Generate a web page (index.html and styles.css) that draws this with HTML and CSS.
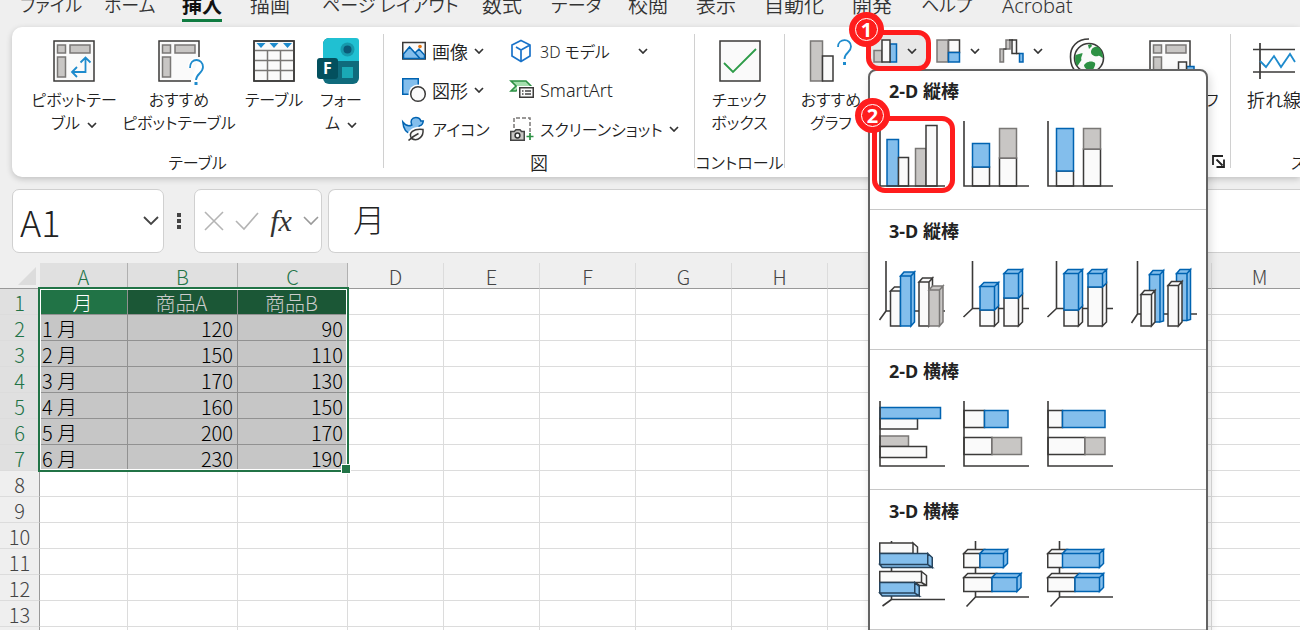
FILE: index.html
```html
<!DOCTYPE html>
<html lang="ja">
<head>
<meta charset="utf-8">
<title>Book1 - Excel</title>
<link rel="stylesheet" href="styles.css">
</head>
<body>
<svg class="defs" aria-hidden="true">
  <symbol id="chev" viewBox="0 0 10 6"><path d="M1 1l4 4 4-4" fill="none" stroke="#333" stroke-width="1.7"/></symbol>
</svg>

<nav class="tabs">
  <a href="#" class="kana">ファイル</a><a href="#" class="kana">ホーム</a><a href="#" class="active">挿入</a><a href="#">描画</a><a href="#" class="kana">ページ レイアウト</a><a href="#">数式</a><a href="#" class="kana">データ</a><a href="#">校閲</a><a href="#">表示</a><a href="#">自動化</a><a href="#">開発</a><a href="#" class="kana">ヘルプ</a><a href="#">Acrobat</a>
</nav>

<div class="ribbon">
  <section class="group group-tables">
    <div class="tools">
      <button class="big w92">
        <svg width="44" height="52" viewBox="0 0 44 52"><path class="w" d="M2 4h40v40H2z"/><path class="g" d="M5.500 8h8v8h-8zM18 8h20v8H18zM5.500 20h8v20h-8z"/><path class="line" d="M33.500 21v14H21M28.500 25.500l5-5 5 5M25 30l-5 5 5 5"/></svg>
        <span>ピボットテー<br>ブル <svg class="chev"><use href="#chev"/></svg></span>
      </button>
      <button class="big w118">
        <svg width="44" height="52" viewBox="0 0 44 52"><path class="w" d="M42 20V4H2v40h32" /><path class="g" d="M5.500 8h8v8h-8zM18 8h20v8H18zM5.500 20h8v20h-8z"/><path class="halo" d="M33 31c0-11 13-10 13-1 0 6-7 7-7 13"/><path class="line" d="M33 31c0-11 13-10 13-1 0 6-7 7-7 13"/><path class="dot" d="M37.500 45h3v3h-3z"/></svg>
        <span>おすすめ<br>ピボットテーブル</span>
      </button>
      <button class="big w72">
        <svg width="44" height="52" viewBox="0 0 44 52"><path class="w" d="M2 4h40v40H2z"/><path d="M2 13.500h40M2 23.500h40M2 33.500h40M15.500 13v31M28.500 13v31" stroke="#797775" stroke-width="1.500"/><path d="M2 4h40v40H2z" fill="none" stroke="#3b3a39" stroke-width="1.500"/><path class="dot" d="M4.500 6h9L9 11zM17.500 6h9L22 11zM31 6h9l-4.500 5z"/></svg>
        <span>テーブル</span>
      </button>
      <button class="big w62">
        <svg width="50" height="52" viewBox="0 0 50 52"><rect x="7" y="1" width="36" height="46" rx="6" fill="#0f6b7c"/><path d="M13 1h27a3 3 0 0 1 3 3v20H7V7a6 6 0 0 1 6-6z" fill="#20c0d2"/><circle cx="31.500" cy="12.500" r="7" fill="#1699ac"/><circle cx="31.500" cy="12.500" r="4" fill="#0b5a78"/><rect x="26" y="30" width="11" height="11" fill="#1aa9b5"/><rect x="1" y="21" width="21" height="21" rx="3" fill="#03505e"/><text x="11.500" y="37" text-anchor="middle" class="f">F</text></svg>
        <span>フォー<br>ム <svg class="chev"><use href="#chev"/></svg></span>
      </button>
    </div>
    <div class="caption">テーブル</div>
  </section>
  <i class="sep"></i>
  <section class="group group-figs">
    <div class="tools">
      <div class="stack">
        <button class="small"><svg width="24" height="24" viewBox="0 0 24 24"><path class="w" d="M.750 3.500h22.500v16.500H.750z"/><path class="b" d="M1.500 15l6-7L18 19.500H1.500zM13 14l4-4 5.500 6v3.500H18z"/><circle cx="18" cy="7.500" r="1.800" fill="#e8730c"/></svg>画像<svg class="chev"><use href="#chev"/></svg></button>
        <button class="small"><svg width="24" height="24" viewBox="0 0 24 24"><path class="b" d="M.750.750h15.500v15.500H.750z"/><circle cx="16" cy="16" r="9.500" fill="#fff"/><circle class="w" cx="16" cy="16" r="7.300"/></svg>図形<svg class="chev"><use href="#chev"/></svg></button>
        <button class="small kana"><svg width="24" height="24" viewBox="0 0 24 24"><path class="b" d="M.800 5c3 4 6 4.500 9 3-2-4 0-7.500 4-7.500 3 0 4.500 1.500 5 3.500h2.500c-.3 3-2 4.500-4 5 0 4-4 8-8 8-4.500-1-8-5-8.500-12z"/><path d="M9.500 21.500c-3.500-6 2-10 11.500-9 .8 7-5 12.500-11.500 9z" fill="#fff" stroke="#fff" stroke-width="5"/><path class="w" d="M9.500 21.500c-3.500-6 2-10 11.500-9 .8 7-5 12.500-11.500 9z"/><path class="ax" d="M6.500 23.500c3-3 6-5 10-7"/></svg>アイコン</button>
      </div>
      <div class="stack stack-wide">
        <button class="small kana gap-wide"><svg width="24" height="24" viewBox="0 0 24 24"><path d="M11 1.500l9 4.500v11l-9 5.500L2 17V6zM6 8l5 3 9-5M11 11v11" fill="none" stroke="#1a73c9" stroke-width="1.700"/></svg>3D モデル<svg class="chev"><use href="#chev"/></svg></button>
        <button class="small"><svg width="24" height="24" viewBox="0 0 24 24"><path d="M1 3h15l5 5-2 2H9l-3 3H1l5-5z" fill="#a5dfae" stroke="#2d9144" stroke-width="1.600"/><path d="M7 8h17v14H7z" fill="#fff"/><path class="w" d="M9.750 9.750h13.500v9.500H9.750z"/><path d="M12 13h1.500M12 16h1.500M15 13h6M15 16h6" stroke="#444" stroke-width="1.400"/></svg>SmartArt</button>
        <button class="small kana"><svg width="24" height="24" viewBox="0 0 24 24"><path d="M4 11V1h16v14" fill="none" stroke="#797775" stroke-width="1.500" stroke-dasharray="4 2"/><path class="g" d="M.750 14.500h3.500L6 12.750h4l1.500 1.750h2.750v8.750H.750z" style="stroke:#444"/><circle cx="7.500" cy="18.500" r="2.400" fill="#fff" stroke="#333" stroke-width="1.500"/><path d="M20 16v7M16.500 19.500h7" stroke="#2d9144" stroke-width="1.700"/></svg>スクリーンショット<svg class="chev"><use href="#chev"/></svg></button>
      </div>
    </div>
    <div class="caption">図</div>
  </section>
  <i class="sep"></i>
  <section class="group group-ctrl">
    <div class="tools">
      <button class="big w90">
        <svg width="44" height="52" viewBox="0 0 44 52"><path class="w" d="M2 4h40v40H2z"/><path d="M6 26l9 9 23-23" fill="none" stroke="#2d9c48" stroke-width="1.800"/></svg>
        <span>チェック<br>ボックス</span>
      </button>
    </div>
    <div class="caption">コントロール</div>
  </section>
  <i class="sep"></i>
  <section class="group group-charts">
    <div class="tools">
      <button class="big w80">
        <svg width="44" height="52" viewBox="0 0 44 52"><path class="g" d="M1.500 4h12v40h-12z"/><path class="w" d="M13.500 19H24v25H13.500z"/><path class="line" d="M29 10c0-9 13-9 13-.5C42 16 35.500 15 35.500 22"/><path class="dot" d="M34 25h3v3h-3z"/></svg>
        <span>おすすめ<br>グラフ</span>
      </button>
      <div class="chart-btn">
        <button class="mini pressed" aria-label="縦棒/横棒グラフの挿入"><svg width="26" height="24" viewBox="0 0 26 24"><path class="g" d="M1 11.500h8V23H1z"/><path class="b" d="M17 5h6.500v18H17z"/><path class="w" d="M9 1h8v22H9z"/></svg><svg class="chev"><use href="#chev"/></svg></button>
        <div class="menu">
          <section><h3>2-D 縦棒</h3><div class="gallery">
            <button aria-label="集合縦棒"><svg viewBox="0 0 66 66"><path class="b" d="M8 18.500h11.500V65H8z"/><path class="w" d="M19.500 36.500h10V65h-10z"/><path class="g" d="M36.500 27.500h10.500V65H36.500z"/><path class="w" d="M47 4.500h11V65H47z"/><path class="ax" d="M1 0v65h65"/></svg></button>
            <button aria-label="積み上げ縦棒"><svg viewBox="0 0 66 66"><path class="w" d="M9.500 46h17v19h-17zM36.500 37h17v28h-17z"/><path class="b" d="M9.500 22.500h17V46h-17z"/><path class="g" d="M36.500 7.500h17V37h-17z"/><path class="ax" d="M1 0v65h65"/></svg></button>
            <button aria-label="100% 積み上げ縦棒"><svg viewBox="0 0 66 66"><path class="w" d="M9.500 50h17v15h-17zM36.500 28h17v37h-17z"/><path class="b" d="M9.500 7.500h17V50h-17z"/><path class="g" d="M36.500 7.500h17V28h-17z"/><path class="ax" d="M1 0v65h65"/></svg></button>
          </div></section>
          <section><h3>3-D 縦棒</h3><div class="gallery">
            <button aria-label="3-D 集合縦棒"><svg viewBox="0 0 66 66"><path class="ax" d="M7 0v50h59M7 50l-6.500 9"/><path class="w" d="M11.500 30h10v35h-10zM11.500 30l4-4h10l-4 4z"/><path class="b" d="M21.500 15H32v50H21.500zM21.500 15l3.500-4h10.500L32 15zM32 15l3.500-4v50L32 65z"/><path class="w" d="M40 21h10v44H40zM40 21l3.500-4h10L50 21zM50 21l3.500-4v44L50 65z"/><path class="g" d="M50 29h10.500v36H50zM50 29l3.500-4H64l-3.500 4zM60.500 29l3.500-4v36l-3.500 4z"/></svg></button>
            <button aria-label="3-D 積み上げ縦棒"><svg viewBox="0 0 66 66"><path class="ax" d="M9.500 0v47.500H66M9.500 47.500L.5 56"/><path class="w" d="M17 49h14.500v16H17zM31.500 49l4-4v16l-4 4zM41 37h14.500v28H41zM55.500 37l4-4v28l-4 4z"/><path class="b" d="M17 25.500h14.500V49H17zM17 25.500l4-4h14.500l-4 4zM31.500 25.500l4-4V45l-4 4zM41 12.500h14.500V37H41zM41 12.500l4-4h14.500l-4 4zM55.500 12.500l4-4V33l-4 4z"/></svg></button>
            <button aria-label="3-D 100% 積み上げ縦棒"><svg viewBox="0 0 66 66"><path class="ax" d="M9.500 0v47.500H66M9.500 47.500L.5 56"/><path class="w" d="M17 49h14.500v16H17zM31.500 49l4-4v16l-4 4zM41 26h14.500v39H41zM55.500 26l4-4v39l-4 4z"/><path class="b" d="M17 12.500h14.500V49H17zM17 12.500l4-4h14.500l-4 4zM31.500 12.500l4-4V45l-4 4zM41 12.500h14.500V26H41zM41 12.500l4-4h14.500l-4 4zM55.500 12.500l4-4V22l-4 4z"/></svg></button>
            <button aria-label="3-D 縦棒"><svg viewBox="0 0 66 66"><path class="ax" d="M6.500 0v53H66M6.500 53L.5 62"/><path class="b" d="M18.500 13.500H29V61H18.500zM18.500 13.500l3.500-4h10.500l-3.500 4zM29 13.500l3.500-4V60L29 61zM45.500 12.500H56v47H45.500zM45.500 12.500l3.500-4h10.500l-3.500 4zM56 12.500l3.500-4v50L56 59.500z"/><path class="w" d="M10 33.500h10.500V65H10zM10 33.500l3.500-4H24l-3.500 4zM20.500 33.500l3.500-4V61l-3.500 4zM37 24.500h10.500V65H37zM37 24.500l3.500-4H51l-3.500 4zM47.500 24.500l3.500-4V61l-3.500 4z"/></svg></button>
          </div></section>
          <section><h3>2-D 横棒</h3><div class="gallery">
            <button aria-label="集合横棒"><svg viewBox="0 0 66 66"><path class="w" d="M1 17.500h37.500V28H1z"/><path class="g" d="M1 35h28.500v10.500H1z"/><path class="w" d="M1 45.500h46.500v11H1z"/><path class="b" d="M1 6.500h60.500v11H1z"/><path class="ax" d="M1 0v65h65"/></svg></button>
            <button aria-label="積み上げ横棒"><svg viewBox="0 0 66 66"><path class="w" d="M1 9.500h20.500v17H1zM1 36.500h28v17H1z"/><path class="b" d="M21.500 9.500H45v17H21.500z"/><path class="g" d="M29 36.500h29.500v17H29z"/><path class="ax" d="M1 0v65h65"/></svg></button>
            <button aria-label="100% 積み上げ横棒"><svg viewBox="0 0 66 66"><path class="w" d="M1 9.500h14.500v17H1zM1 36.500h37v17H1z"/><path class="b" d="M15.500 9.500H58v17H15.500z"/><path class="g" d="M38 36.500h20v17H38z"/><path class="ax" d="M1 0v65h65"/></svg></button>
          </div></section>
          <section><h3>3-D 横棒</h3><div class="gallery">
            <button aria-label="3-D 集合横棒"><svg viewBox="0 0 66 66"><path class="ax" d="M12.500 0v58.500H66M12.500 58.500L3.500 65"/><path class="w" d="M.750 2H34v10.500H.750zM34 2l4.500 4v10L34 12.500z"/><path class="b dark" d="M.750 12.500h48v11h-48zM48.750 12.500l4.500 4v10l-4.500-3zM.750 23.500l2.500 3h50l-4.500-3z"/><path class="w" d="M.750 30.500H42.500v11H.750zM42.500 30.500l5 4v10h-7l-5-3h7zM42.500 41.500l5 3"/><path class="b dark" d="M.750 41.500h35V52h-35zM35.750 41.500l4.500 4V55l-4.500-3zM.750 52l2.500 3h37l-4.500-3z"/></svg></button>
            <button aria-label="3-D 積み上げ横棒"><svg viewBox="0 0 66 66"><path class="ax" d="M12.500 0v56H66M12.500 56l-9 9.500"/><path class="w" d="M.750 12.500H17v14H.750zM.750 12.500l4-4H21l-4 4zM.750 36.500H29v14H.750zM.750 36.500l4-4H33l-4 4z"/><path class="b" d="M17 12.500h23.500v14H17zM17 12.500l4-4h23.500l-4 4zM40.500 12.500l4-4v14l-4 4zM29 36.500h25v14H29zM29 36.500l4-4h25l-4 4zM54 36.500l4-4v14l-4 4z"/></svg></button>
            <button aria-label="3-D 100% 積み上げ横棒"><svg viewBox="0 0 66 66"><path class="ax" d="M12.500 0v56H66M12.500 56l-9 9.500"/><path class="w" d="M.750 12.500h15v14h-15zM.750 12.500l4-4h15l-4 4zM.750 36.500H28v14H.750zM.750 36.500l4-4H32l-4 4z"/><path class="b" d="M15.500 12.500h37v14h-37zM15.500 12.500l4-4h37l-4 4zM52.500 12.500l4-4v14l-4 4zM28 36.500h24.500v14H28zM28 36.500l4-4h24.500l-4 4zM52.500 36.500l4-4v14l-4 4z"/></svg></button>
          </div></section>
        </div>
        <div class="mark mark-one"><span class="badge"><b>1</b></span></div>
        <div class="mark mark-two"><span class="badge"><b>2</b></span></div>
      </div>
      <button class="mini" aria-label="階層構造グラフの挿入"><svg width="26" height="24" viewBox="0 0 26 24"><path class="w" d="M12.500 1h11v12.500h-11z"/><path class="g" d="M1 1h11v22H1z"/><path class="b" d="M12.500 13.500h11V23h-11z"/></svg><svg class="chev"><use href="#chev"/></svg></button>
      <button class="mini" aria-label="ウォーターフォール図の挿入"><svg width="26" height="24" viewBox="0 0 26 24"><path class="g" d="M1 10h3.500v13H1zM7 1h4v9H7z"/><path class="w" d="M13 1h4.500v13.500H13z"/><path class="b" d="M20.500 14.500H24V23h-3.500z"/><path d="M4.500 10h3M10 1h4M17 14.500h3.500" stroke="#3b3a39" stroke-width="1.500"/></svg><svg class="chev"><use href="#chev"/></svg></button>
      <button class="big w58" aria-label="マップ"><svg width="44" height="52" viewBox="3 0 44 52"><path d="M25 2C13 2 6 10 6.500 20c0 6 2 12 6 15" fill="none" stroke="#3b3a39" stroke-width="1.600"/><circle cx="25" cy="21" r="14.500" fill="#fafafa" stroke="#3b3a39" stroke-width="1.600"/><path d="M27 15c0-3 3-6 7-5 3 2 5 6 5 11-2 0-3-3-5-2-3 1-7-1-7-4zM11.500 18l7-2c0 3-2 4-1 7l-4 6c-2-2-3-7-2-11zM22 26c3-2 7-2 9 0 1 3-2 5-2 8-5 0-9-3-9-6zM24 8l3-1 1 2-3 3z" fill="#2d9144"/></svg></button>
      <button class="big w104">
        <svg width="44" height="52" viewBox="0 0 44 52"><path class="w" d="M2 4h40v40H2z"/><path class="g" d="M5.500 8h8v8h-8zM18 8h20v8H18zM5.500 20h8v20h-8z"/><path class="b" d="M38.500 29.500H46V44h-7.500z"/><path class="w" d="M30.500 25h8v19h-8z"/></svg>
        <span>ピボットグラフ</span>
      </button>
    </div>
    <button class="launcher" aria-label="グラフのオプション"><svg width="13" height="13" viewBox="0 0 13 13"><path d="M1 10V1h10M4.500 4.500l6 6M12 4.500V12H4.500" fill="none" stroke="#222" stroke-width="1.800"/></svg></button>
  </section>
  <i class="sep"></i>
  <section class="group group-spark">
    <div class="tools">
      <button class="big w86 kanji">
        <svg width="44" height="52" viewBox="0 0 44 52"><path d="M8 6v36M1 12.500h42M1 35h42" stroke="#3b3a39" stroke-width="1.700"/><path class="line" d="M8 24l6 6 8-11 7 11 9-13 5 8"/></svg>
        <span>折れ線</span>
      </button>
    </div>
    <div class="caption">スパークライン</div>
  </section>
</div>

<div class="formula-bar">
  <div class="box name-box"><input type="text" value="A1" aria-label="名前ボックス"><svg class="chev-l" viewBox="0 0 16 10"><path d="M1 1l7 7 7-7" fill="none" stroke="#444" stroke-width="1.800"/></svg></div>
  <svg class="dots" viewBox="0 0 4 16"><path d="M0 0h4v4H0zM0 6h4v4H0zM0 12h4v4H0z" fill="#444"/></svg>
  <div class="box fx-box">
    <button aria-label="キャンセル"><svg width="20" height="20" viewBox="0 0 20 20"><path d="M1 1l18 18M19 1L1 19" stroke="#b4b4b4" stroke-width="1.600"/></svg></button>
    <button aria-label="入力"><svg width="24" height="18" viewBox="0 0 24 18"><path d="M1 9l8 8L23 1" fill="none" stroke="#b4b4b4" stroke-width="1.600"/></svg></button>
    <button class="fx" aria-label="関数の挿入">fx</button>
    <svg class="chev-l" viewBox="0 0 16 10"><path d="M1 1l7 7 7-7" fill="none" stroke="#999" stroke-width="1.600"/></svg>
  </div>
  <div class="box formula"><input type="text" value="月" aria-label="数式バー"></div>
</div>

<main class="sheet">
  <table>
    <colgroup><col class="c-head"><col class="c-a"><col class="c-b"><col class="c-b"><col span="10" class="c-n"></colgroup>
    <tr class="heads"><th class="corner"><svg width="18" height="18" viewBox="0 0 18 18"><path d="M18 0v18H0z" fill="#dcdcdc"/></svg></th><th class="on">A</th><th class="on">B</th><th class="on">C</th><th>D</th><th>E</th><th>F</th><th>G</th><th>H</th><th>I</th><th>J</th><th>K</th><th>L</th><th>M</th></tr>
    <tr class="sel title"><th>1</th><td class="cur">月</td><td>商品A</td><td>商品B</td><td></td><td></td><td></td><td></td><td></td><td></td><td></td><td></td><td></td><td></td></tr>
    <tr class="sel"><th>2</th><td class="month">1 月</td><td>120</td><td>90</td><td></td><td></td><td></td><td></td><td></td><td></td><td></td><td></td><td></td><td></td></tr>
    <tr class="sel"><th>3</th><td class="month">2 月</td><td>150</td><td>110</td><td></td><td></td><td></td><td></td><td></td><td></td><td></td><td></td><td></td><td></td></tr>
    <tr class="sel"><th>4</th><td class="month">3 月</td><td>170</td><td>130</td><td></td><td></td><td></td><td></td><td></td><td></td><td></td><td></td><td></td><td></td></tr>
    <tr class="sel"><th>5</th><td class="month">4 月</td><td>160</td><td>150</td><td></td><td></td><td></td><td></td><td></td><td></td><td></td><td></td><td></td><td></td></tr>
    <tr class="sel"><th>6</th><td class="month">5 月</td><td>200</td><td>170</td><td></td><td></td><td></td><td></td><td></td><td></td><td></td><td></td><td></td><td></td></tr>
    <tr class="sel"><th>7</th><td class="month">6 月</td><td>230</td><td>190</td><td></td><td></td><td></td><td></td><td></td><td></td><td></td><td></td><td></td><td></td></tr>
    <tr><th>8</th><td></td><td></td><td></td><td></td><td></td><td></td><td></td><td></td><td></td><td></td><td></td><td></td><td></td></tr>
    <tr><th>9</th><td></td><td></td><td></td><td></td><td></td><td></td><td></td><td></td><td></td><td></td><td></td><td></td><td></td></tr>
    <tr><th>10</th><td></td><td></td><td></td><td></td><td></td><td></td><td></td><td></td><td></td><td></td><td></td><td></td><td></td></tr>
    <tr><th>11</th><td></td><td></td><td></td><td></td><td></td><td></td><td></td><td></td><td></td><td></td><td></td><td></td><td></td></tr>
    <tr><th>12</th><td></td><td></td><td></td><td></td><td></td><td></td><td></td><td></td><td></td><td></td><td></td><td></td><td></td></tr>
    <tr><th>13</th><td></td><td></td><td></td><td></td><td></td><td></td><td></td><td></td><td></td><td></td><td></td><td></td><td></td></tr>
    <tr><th></th><td></td><td></td><td></td><td></td><td></td><td></td><td></td><td></td><td></td><td></td><td></td><td></td><td></td></tr>
  </table>
  <div class="selection"></div>
</main>
</body>
</html>
```
FILE: styles.css
```css
* { box-sizing: border-box; }
html, body { height: 100%; }
body {
  margin: 0;
  overflow: hidden;
  display: flex;
  flex-direction: column;
  background: #efefef;
  color: #222;
  font: 350 16px "Noto Sans", "Noto Sans CJK JP", sans-serif;
  font-feature-settings: "palt";
}
button {
  border: 0;
  padding: 0;
  background: none;
  color: inherit;
  font: inherit;
  font-feature-settings: inherit;
}
svg { overflow: visible; }
.defs { position: absolute; width: 0; height: 0; }

.w { fill: #fafafa; stroke: #3b3a39; stroke-width: 1.5; }
.g { fill: #c8c6c4; stroke: #797775; stroke-width: 1.5; }
.b { fill: #83beec; stroke: #0063b1; stroke-width: 1.5; }
.b.dark { stroke: #26435c; }
.ax { fill: none; stroke: #3b3a39; stroke-width: 1.6; }
.line { fill: none; stroke: #1e8bcd; stroke-width: 1.8; }
.halo { fill: none; stroke: #fff; stroke-width: 5; }
.dot { fill: #1e8bcd; }
.f { font: bold 16px "Noto Sans", sans-serif; fill: #fff; }

/* Tabs */
.tabs {
  flex: none;
  height: 27px;
  padding-left: 20px;
  display: grid;
  grid-template-columns: 84px 78px 68px 72px 160px 69px 77px 68px 68px 88px 69px 81px auto;
  justify-items: start;
  align-items: start;
  font-size: 20px;
  line-height: 11px;
  white-space: nowrap;
}
.tabs a { color: #333; text-decoration: none; }
.tabs .kana { font-size: 18px; }
.tabs .active {
  padding-bottom: 8px;
  border-bottom: 3px solid #107c41;
  color: #111;
  font-weight: bold;
}

/* Ribbon */
.ribbon {
  flex: none;
  display: flex;
  height: 150px;
  margin-left: 12px;
  border-radius: 10px 0 0 10px;
  background: #fff;
  box-shadow: 0 2px 6px rgba(0, 0, 0, .2);
  position: relative;
  z-index: 2;
}
.group {
  flex: none;
  display: flex;
  flex-direction: column;
  justify-content: space-between;
  position: relative;
  white-space: nowrap;
}
.sep { flex: none; width: 1px; margin: 7px 0 9px; background: #d0d0d0; }
.tools { display: flex; align-items: flex-start; }
.caption { text-align: center; line-height: 24px; padding-bottom: 2px; }
.group-tables { width: 371px; }
.group-tables .tools { padding-left: 16px; }
.group-figs { width: 310px; }
.group-figs .tools { padding: 4px 0 0 18px; }
.group-figs .caption { font-size: 18px; }
.group-ctrl { width: 89px; }
.group-charts { width: 445px; }
.group-charts .tools { padding-left: 6px; }
.group-spark .caption { padding-left: 60px; }
.big {
  flex: none;
  display: flex;
  flex-direction: column;
  align-items: center;
  padding-top: 10px;
  line-height: 23px;
}
.w58 { width: 58px; }
.w62 { width: 62px; }
.w72 { width: 72px; }
.w80 { width: 80px; }
.w86 { width: 86px; }
.w90 { width: 89px; }
.w92 { width: 92px; }
.w104 { width: 104px; }
.w118 { width: 118px; }
.kanji { font-size: 18px; }
.chev { width: 10px; height: 6px; vertical-align: middle; }
.big .chev { margin-left: 3px; }
.stack { display: grid; grid-auto-rows: 39px; width: 108px; }
.stack-wide { width: 180px; }
.small { display: flex; align-items: center; gap: 6px; font-size: 18px; }
.small.kana { font-size: 16px; }
.gap-wide .chev { margin-left: 22px; }
.chart-btn { position: relative; width: 63px; }
.mini { display: flex; align-items: center; gap: 8px; width: 63px; height: 32px; margin-top: 8px; padding-left: 2px; }
.pressed { width: 56px; background: #e8e8e8; }
.launcher { align-self: flex-end; height: 13px; margin: 0 5px 9px 0; line-height: 0; }

/* Chart gallery */
.menu {
  position: absolute;
  top: 42px;
  left: -3px;
  width: 340px;
  height: 700px;
  border: 2px solid #636363;
  border-radius: 8px;
  background: #fff;
  box-shadow: 2px 4px 10px rgba(0, 0, 0, .15);
}
.menu section { height: 140px; padding: 9px 9px 0; border-bottom: 1px solid #c8c8c8; }
.menu section:first-child { height: 139px; padding-top: 8px; }
.menu h3 { margin: 0 0 18px 10px; font-size: 18px; line-height: 24px; }
.gallery { display: flex; gap: 18px; }
.gallery button, .gallery svg { display: block; width: 66px; height: 66px; }

/* Numbered callouts */
.mark { position: absolute; border: 5px solid #ff1d1d; border-radius: 13px; }
.mark-one { left: -5px; top: 3px; width: 65px; height: 41px; }
.mark-two { left: 1px; top: 89px; width: 83px; height: 77px; }
.badge {
  position: absolute;
  left: -22px;
  top: -23px;
  width: 35px;
  height: 35px;
  padding: 6px;
  border-radius: 50%;
  background: #ff1d1d;
}
.badge b {
  display: block;
  width: 23px;
  height: 23px;
  border: 1px solid #fff;
  border-radius: 50%;
  color: #fff;
  font-size: 20px;
  line-height: 21px;
  text-align: center;
}

/* Formula bar */
.formula-bar { flex: none; display: flex; align-items: center; height: 64px; margin: 12px 0 10px 12px; }
.box { display: flex; align-items: center; height: 64px; border: 1px solid #d0d0d0; border-radius: 7px; background: #fff; }
.box input {
  width: 100%;
  min-width: 0;
  border: 0;
  padding: 0;
  background: none;
  color: #222;
  font: 300 36px "Noto Sans CJK JP", sans-serif;
}
.name-box { width: 152px; padding: 0 4px 0 7px; }
.chev-l { flex: none; width: 16px; height: 10px; }
.dots { width: 4px; height: 16px; margin: 0 13px; }
.fx-box { width: 128px; padding: 0 2px 0 9px; justify-content: space-between; }
.fx-box button { display: flex; }
.fx-box .fx { font: italic 30px/32px "Liberation Serif", serif; color: #333; }
.formula { flex: 1; margin-left: 6px; padding: 0 0 6px 24px; border-right: 0; border-radius: 7px 0 0 7px; }
.formula input { font-size: 32px; }

/* Sheet */
.sheet { flex: 1; position: relative; overflow: hidden; }
table { width: 1308px; table-layout: fixed; border-collapse: separate; border-spacing: 0; font: 300 20px "Noto Sans CJK JP", sans-serif; }
.c-head { width: 40px; }
.c-a { width: 88px; }
.c-b { width: 110px; }
.c-n { width: 96px; }
tr { height: 26px; }
th, td { height: 26px; padding: 3px 4px 0 2px; line-height: 22px; border: 0 solid #dcdcdc; border-width: 0 1px 1px 0; }
td { background: #fff; color: #000; text-align: right; }
th { padding: 3px 0 0; background: #efefef; color: #444; font-weight: 300; text-align: center; }
tr > th:first-child { border-right-color: #999; }
.heads th { border-bottom-color: #999; }
.heads .corner { border-right-color: #efefef; padding: 0 0 0 14px; line-height: 0; }
.heads .on, .sel th { background: #e0e0e0; color: #217346; }
.heads .on { border-right-color: #b0b0b0; }
.sel td:nth-child(-n+4) { background: #c6c6c6; border-color: #919191; }
.title td:nth-child(-n+4) { background: #1b5736; color: #ccc; text-align: center; }
.title td.cur { background: #217346; color: #fff; }
td.month { text-align: left; }
.selection {
  position: absolute;
  left: 38px;
  top: 24px;
  width: 311px;
  height: 185px;
  border: 2px solid #217346;
  box-shadow: inset 0 0 0 1px #fff;
}
.selection::after {
  content: "";
  position: absolute;
  right: -4px;
  bottom: -4px;
  width: 8px;
  height: 8px;
  border: 1px solid #fff;
  background: #217346;
}
```
